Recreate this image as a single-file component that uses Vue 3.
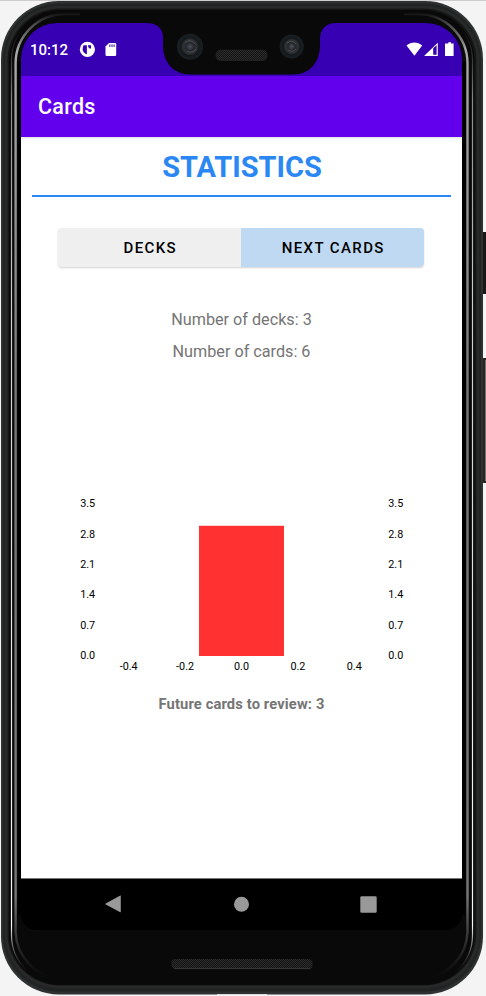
<script setup>
const yTicks = ['3.5', '2.8', '2.1', '1.4', '0.7', '0.0']
const xTicks = ['-0.4', '-0.2', '0.0', '0.2', '0.4']
</script>

<template>
  <div class="device">
    <svg class="bezel" width="486" height="996" viewBox="0 0 486 996" aria-hidden="true">
      <defs>
        <linearGradient id="glow" x1="0" y1="0" x2="0" y2="996" gradientUnits="userSpaceOnUse">
          <stop offset="0.012" stop-color="#888" stop-opacity="0" />
          <stop offset="0.025" stop-color="#777" stop-opacity="0.6" />
          <stop offset="0.05" stop-color="#a8a8a8" />
          <stop offset="0.17" stop-color="#999" />
          <stop offset="0.4" stop-color="#777" />
          <stop offset="0.9" stop-color="#777" />
          <stop offset="0.98" stop-color="#555" stop-opacity="0" />
        </linearGradient>
        <linearGradient id="rim" x1="0" y1="0" x2="0" y2="996" gradientUnits="userSpaceOnUse">
          <stop offset="0.03" stop-color="#888" stop-opacity="0" />
          <stop offset="0.1" stop-color="#aaa" stop-opacity="0.8" />
          <stop offset="0.3" stop-color="#ccc" />
          <stop offset="0.93" stop-color="#f8f8f8" />
          <stop offset="0.975" stop-color="#777" stop-opacity="0" />
        </linearGradient>
        <pattern id="mesh" width="2" height="2" patternUnits="userSpaceOnUse">
          <rect width="2" height="2" fill="#141414" />
          <rect width="1" height="1" fill="#2c2c2c" />
          <rect x="1" y="1" width="1" height="1" fill="#2c2c2c" />
        </pattern>
        <radialGradient id="lens">
          <stop offset="0" stop-color="#4c5260" />
          <stop offset="0.3" stop-color="#25272b" />
          <stop offset="0.55" stop-color="#303234" />
          <stop offset="0.68" stop-color="#15191c" />
          <stop offset="1" stop-color="#1a2024" />
        </radialGradient>
      </defs>
      <rect width="486" height="1" fill="#ccc" />
      <rect x="481" y="232" width="7" height="62" rx="1.5" fill="#1b1917" />
      <rect x="482" y="358" width="7" height="125" rx="1.5" fill="#282624" />
      <path d="M485.5 360V481" stroke="#77736f" />
      <rect x="1" y="1" width="482" height="993.5" rx="58" fill="#2e3131" />
      <rect x="3" y="3.5" width="478" height="988" rx="56" fill="#222424" />
      <rect x="5" y="6" width="474" height="982" rx="54" fill="#282a2a" />
      <rect x="7.5" y="8.5" width="469" height="977" rx="52" fill="#161616" />
      <rect x="9" y="10" width="465.5" height="975" rx="51" fill="#090909" />
      <path d="M60 11.5A48.5 48.5 0 0 0 11.5 60V935A49 49 0 0 0 60 984M423.5 11.5A49 49 0 0 1 472.5 60V935A49 49 0 0 1 423.5 984" fill="none" stroke="url(#rim)" stroke-width="1.2" />
      <path d="M80 14H65A49.5 49.5 0 0 0 15.6 63V932A49 49 0 0 0 60 979M404 14H418A49.5 49.5 0 0 1 467.5 63V932A49 49 0 0 1 423 979" fill="none" stroke="url(#glow)" stroke-width="2.4" />
      <path d="M19.5 62V915M463.8 62V915" stroke="#000" stroke-width="3.4" />
      <rect x="171.5" y="959" width="141" height="10" rx="4" fill="url(#mesh)" />
      <path d="M174 968.6H310" stroke="#383838" />
      <path d="M217 994.5H267" stroke="#ddd" />
    </svg>

    <div class="screen">
      <div class="status">
        <svg class="notch" width="190" height="52" viewBox="146 23 190 52">
          <path d="M146 22V23C158 23 163 29 163 38V45C163 62 173 74.5 191 74.5H293C310 74.5 320 62 320 45V39C320 29 326 23 336 23V22Z" fill="#090909" />
          <circle cx="190" cy="46.7" r="13" fill="url(#lens)" />
          <circle cx="291.7" cy="46.5" r="12" fill="url(#lens)" />
          <path d="M185 43q5-5 10 1M187 51q5 3 9-2M287 43q5-4 9 1M288 50q5 3 8-1" fill="none" stroke="#52565c" stroke-width="0.8" />
          <rect x="216" y="50" width="51" height="10.5" rx="4.5" fill="url(#mesh)" stroke="#242424" stroke-width="0.7" />
        </svg>
        <span class="clock">10:12</span>
        <svg class="left-icons" width="39" height="17" viewBox="79 41 39 17" fill="#fff">
          <circle cx="87.4" cy="49.4" r="7.6" />
          <path d="M83.6 45.2H86.9V54.2C84.2 53.6 82.6 51.5 82.6 49Q82.6 46.6 83.6 45.2Z" fill="#3700b3" />
          <path d="M88 45.2H91V48.6Q88 48.6 88 45.2Z" fill="#3700b3" />
          <path d="M109 43H115A1.2 1.2 0 0 1 116.2 44.2V54.8A1.2 1.2 0 0 1 115 56H106.7A1.2 1.2 0 0 1 105.5 54.8V46.6Z" />
          <path d="M109.9 44.4V47M112 44.4V47M114.1 44.4V47" stroke="#3700b3" stroke-width="1" />
        </svg>
        <svg class="right-icons" width="49" height="15" viewBox="406 42 49 15" fill="#fff">
          <path d="M406.5 45.4C411 41.4 417.8 41.4 422.2 45.4L414.4 55.8Z" />
          <path fill-rule="evenodd" d="M424 56L437.8 42.8V56ZM433.2 48.3V54.8H436.6V45.2Z" />
          <path d="M448.3 42.2H451V43.4H453.6V56H445V43.4H448.3Z" />
        </svg>
      </div>
      <header class="appbar">Cards</header>
      <main class="content">
        <h1 class="title">STATISTICS</h1>
        <div class="toggle">
          <button class="decks">DECKS</button>
          <button class="next">NEXT CARDS</button>
        </div>
        <p class="count">Number of decks: 3</p>
        <p class="count">Number of cards: 6</p>
        <svg class="chart" width="341" height="185" viewBox="71 495 341 185">
          <rect x="199" y="525" width="85" height="131" fill="#ffd0d0" />
          <rect x="199" y="526" width="85" height="130" fill="#ff3131" />
          <g v-for="(t, i) in yTicks" :key="t">
            <text x="87.7" :y="507.2 + i * 30.4">{{ t }}</text>
            <text x="395.8" :y="507.2 + i * 30.4">{{ t }}</text>
          </g>
          <text v-for="(t, i) in xTicks" :key="t" :x="128.7 + i * 56.4" y="670.2">{{ t }}</text>
        </svg>
        <p class="future">Future cards to review: 3</p>
      </main>
      <nav class="navbar">
        <svg width="17" height="18" viewBox="0 0 17 18"><path d="M15.8 .7V17Q15.8 17.5 15.3 17.2L.7 9.4Q0 9 .7 8.6L15.3 .6Q15.8 .3 15.8 .7Z" fill="#999" /></svg>
        <svg width="16" height="16" viewBox="0 0 16 16"><circle cx="8.5" cy="8.2" r="7.5" fill="#999" /></svg>
        <svg width="17" height="17" viewBox="0 0 17 17"><rect x=".3" y=".3" width="16.4" height="16.4" rx="1.3" fill="#999" /></svg>
      </nav>
    </div>
  </div>
</template>

<style>
body {
  background: #f4f4f4;
  overflow: hidden;
}
</style>

<style scoped>
.device {
  position: relative;
  box-sizing: border-box;
  width: 486px;
  height: 996px;
  padding: 23px 24px 66px 21px;
  overflow: hidden;
  font-family: Roboto, sans-serif;
}
.bezel {
  position: absolute;
  inset: 0;
}
.screen {
  position: relative;
  display: flex;
  flex-direction: column;
  width: 441px;
  height: 907px;
  overflow: hidden;
  border-radius: 36px 36px 16px 16px;
  background: #000;
}
.status {
  position: relative;
  display: flex;
  align-items: center;
  flex: 0 0 53px;
  box-sizing: border-box;
  padding: 0 7px 0 9px;
  background: #3700b3;
}
.notch {
  position: absolute;
  left: 125px;
  top: 0;
}
.clock {
  width: 49px;
  color: #fff;
  font-size: 15px;
  font-weight: 500;
  line-height: 20px;
}
.right-icons {
  margin-left: auto;
}
.appbar {
  position: relative;
  flex: 0 0 60px;
  box-sizing: border-box;
  padding-left: 17px;
  color: #fff;
  background: #6200ee;
  font-size: 21.5px;
  font-weight: 500;
  letter-spacing: 0.3px;
  line-height: 61px;
  box-shadow: 0 1px 2px rgba(0, 0, 0, 0.14);
}
.content {
  display: flex;
  flex-direction: column;
  align-items: center;
  flex: 1;
  background: #fff;
}
.title {
  width: 419px;
  height: 60px;
  box-sizing: border-box;
  margin: 0;
  padding-left: 1px;
  border-bottom: 2px solid #2b87f3;
  color: #2b87f3;
  font-size: 29px;
  font-weight: 700;
  line-height: 61px;
  text-align: center;
}
.toggle {
  display: flex;
  width: 366px;
  height: 39px;
  margin: 31px 0.5px 37px 0;
  border-radius: 4px;
  overflow: hidden;
  box-shadow: 0 1px 2px rgba(0, 0, 0, 0.18);
}
.toggle button {
  flex: 1;
  padding: 0 0 0 1px;
  border: 0;
  color: #000;
  font-family: inherit;
  font-size: 15px;
  font-weight: 500;
  letter-spacing: 1.4px;
}
.toggle .decks {
  background: #efefef;
}
.toggle .next {
  background: #bfd9f2;
}
.count {
  margin: 0;
  color: #757575;
  font-size: 16.2px;
  line-height: 32px;
}
.chart {
  margin: 127px 0 12px;
}
.chart text {
  fill: #000;
  font-size: 10.8px;
  text-anchor: middle;
}
.future {
  margin: 0;
  color: #757575;
  font-size: 14.7px;
  font-weight: 700;
  letter-spacing: 0.14px;
  line-height: 24px;
}
.navbar {
  display: flex;
  align-items: center;
  justify-content: space-between;
  flex: 0 0 52px;
  box-sizing: border-box;
  padding: 0 85px 1px 84px;
  border-top: 1px solid #777;
  background: #000;
}
</style>
